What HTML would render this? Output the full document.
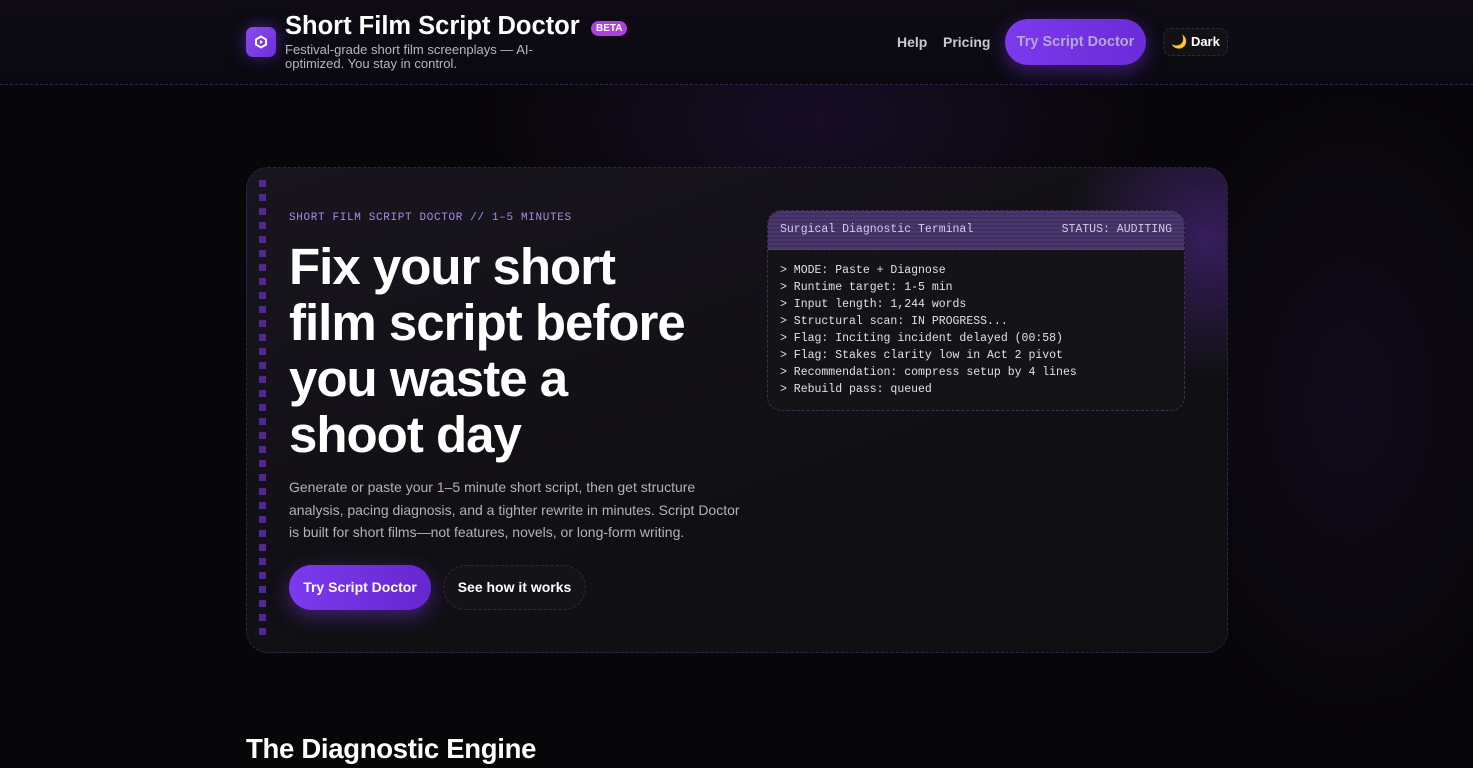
<!DOCTYPE html>
<html><head><meta charset="utf-8"><style>
*{box-sizing:border-box;margin:0;padding:0}
html,body{width:1473px;height:768px;overflow:hidden}
body{background:#070608;font-family:"Liberation Sans",sans-serif;color:#f3f3f5;position:relative}
.bgglow{position:absolute;left:0;top:0;width:1473px;height:768px;background:radial-gradient(ellipse 500px 260px at 820px 120px,rgba(80,40,140,0.22),transparent 70%),radial-gradient(ellipse 300px 500px at 1350px 400px,rgba(60,30,110,0.18),transparent 70%)}
header{position:absolute;left:0;top:0;width:1473px;height:85px;background:linear-gradient(#0e0b14,#0a0910);border-bottom:1px dashed #2e2550}
.logo{position:absolute;left:246px;top:27px;width:30px;height:30px;border-radius:7px;background:linear-gradient(135deg,#8b4cf0,#6a2fd6);box-shadow:0 0 16px rgba(124,58,237,.5)}
.title{position:absolute;left:285px;top:12px;font-size:25.5px;font-weight:bold;color:#fff;white-space:nowrap}
.beta{position:absolute;left:591px;top:21px;background:#b03fe0;color:#fff;font-size:10px;font-weight:bold;padding:2px 5px;border-radius:8px}
.sub{position:absolute;left:285px;top:43px;font-size:13px;color:#b7b5bf;line-height:14px;white-space:nowrap}
.nav{position:absolute;top:34px;font-size:14px;font-weight:bold;color:#c9c7d1}
.btn1{position:absolute;left:1005px;top:19px;width:141px;height:46px;border-radius:23px;background:linear-gradient(90deg,#7c3aed,#6a2bd8);color:#b7a6d8;font-weight:bold;font-size:14.5px;text-align:center;line-height:46px;box-shadow:0 6px 20px rgba(124,58,237,.45)}
.dark{position:absolute;left:1163px;top:28px;width:65px;height:28px;border-radius:8px;border:1px dashed #2d2745;background:#121116;font-size:13px;font-weight:bold;color:#fff;text-align:center;line-height:26px}
.card{position:absolute;left:246px;top:167px;width:982px;height:486px;border-radius:22px;border:1px dashed #2d2545;background:radial-gradient(ellipse 200px 200px at 960px 70px,rgba(110,50,200,.4),transparent 70%),linear-gradient(160deg,#19151f,#111014 50%,#0f0f11);overflow:hidden}
.strip{position:absolute;left:12px;top:12px;width:7px;height:458px;background:repeating-linear-gradient(#4d2a8c 0 7px,transparent 7px 14px)}
.eyebrow{position:absolute;left:42px;top:44px;font-family:"Liberation Mono",monospace;font-size:11px;letter-spacing:0.65px;color:#a98be6}
h1{position:absolute;left:42px;top:71px;font-size:51px;line-height:56px;font-weight:bold;color:#fff;letter-spacing:-1px;width:400px}
.desc{position:absolute;left:42px;top:308px;width:456px;font-size:14px;line-height:22.5px;color:#b3b1ba}
.b1{position:absolute;left:42px;top:397px;width:142px;height:45px;border-radius:23px;background:linear-gradient(90deg,#7c3aed,#6527d0);color:#fff;font-weight:bold;font-size:14px;text-align:center;line-height:45px;box-shadow:0 6px 20px rgba(124,58,237,.45)}
.b2{position:absolute;left:196px;top:397px;width:143px;height:45px;border-radius:23px;border:1px dashed #2d2745;background:#141318;color:#fff;font-weight:bold;font-size:14px;text-align:center;line-height:43px}
.term{position:absolute;left:520px;top:42px;width:418px;height:201px;border-radius:14px;border:1px dashed #3a2f5c;background:#141316;overflow:hidden;font-family:"Liberation Mono",monospace;font-size:11.5px}
.th{height:39px;background:repeating-linear-gradient(#4a3770 0 2px,#40305f 2px 4px);border-bottom:1px dashed #5a4590;color:#d4cce6;padding:12px 12px;display:flex;justify-content:space-between}
.tb{padding:12px 12px;color:#e2e0e6;line-height:17px;white-space:pre}
h2{position:absolute;left:246px;top:733px;font-size:27.5px;font-weight:bold;color:#fff;letter-spacing:-0.3px}
</style></head><body>
<div class="bgglow"></div>
<header>
<div class="logo"><svg width="30" height="30" viewBox="0 0 30 30"><path d="M15 9.5l5 2.9v5.2l-5 2.9-5-2.9v-5.2z" fill="none" stroke="#fff" stroke-width="2"/><path d="M14 13l3 2-3 2z" fill="#fff"/></svg></div>
<div class="title">Short Film Script Doctor</div>
<div class="beta">BETA</div>
<div class="sub">Festival-grade short film screenplays — AI-<br>optimized. You stay in control.</div>
<div class="nav" style="left:897px">Help</div>
<div class="nav" style="left:943px">Pricing</div>
<div class="btn1">Try Script Doctor</div>
<div class="dark">🌙 Dark</div>
</header>
<div class="card">
<div class="strip"></div>
<div class="eyebrow">SHORT FILM SCRIPT DOCTOR // 1–5 MINUTES</div>
<h1>Fix your short film script before you waste a shoot day</h1>
<div class="desc">Generate or paste your 1–5 minute short script, then get structure analysis, pacing diagnosis, and a tighter rewrite in minutes. Script Doctor is built for short films—not features, novels, or long-form writing.</div>
<div class="b1">Try Script Doctor</div>
<div class="b2">See how it works</div>
<div class="term"><div class="th"><span>Surgical Diagnostic Terminal</span><span>STATUS: AUDITING</span></div>
<div class="tb">&gt; MODE: Paste + Diagnose
&gt; Runtime target: 1-5 min
&gt; Input length: 1,244 words
&gt; Structural scan: IN PROGRESS...
&gt; Flag: Inciting incident delayed (00:58)
&gt; Flag: Stakes clarity low in Act 2 pivot
&gt; Recommendation: compress setup by 4 lines
&gt; Rebuild pass: queued</div></div>
</div>
<h2>The Diagnostic Engine</h2>
</body></html>
